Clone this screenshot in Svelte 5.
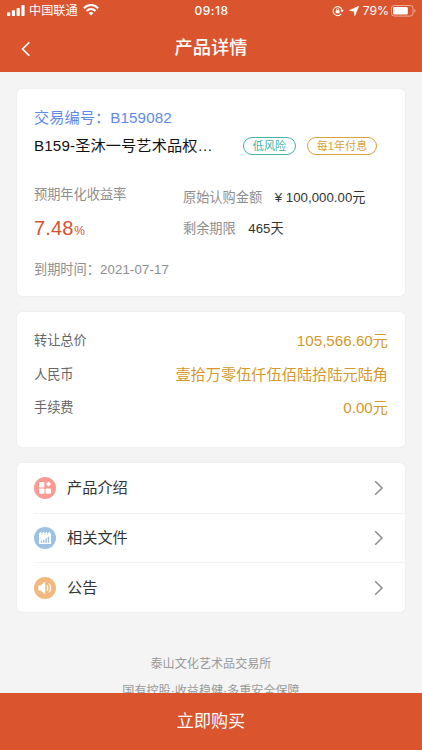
<script>
  const totals = [
    { label: '转让总价', value: '105,566.60元' },
    { label: '人民币', value: '壹拾万零伍仟伍佰陆拾陆元陆角' },
    { label: '手续费', value: '0.00元' }
  ];
  const links = [
    { label: '产品介绍', icon: 'grid', color: '#fb9a93' },
    { label: '相关文件', icon: 'file', color: '#9cc1e1' },
    { label: '公告', icon: 'horn', color: '#f1ba7c' }
  ];
</script>

<div class="screen">
  <header>
    <div class="status">
      <div class="left">
        <svg class="signal" width="18" height="12" viewBox="0 0 18 12" fill="#fff">
          <rect x="0" y="7.3" width="3.2" height="3.7" rx=".8" />
          <rect x="4.8" y="5.3" width="3.2" height="5.7" rx=".8" />
          <rect x="9.6" y="2.9" width="3.2" height="8.1" rx=".8" />
          <rect x="14.4" y="0" width="3.2" height="11" rx=".8" />
        </svg>
        <span class="carrier">中国联通</span>
        <svg class="wifi" width="16" height="12" viewBox="0 0 16 12" fill="none" stroke="#fff" stroke-width="2.1">
          <path d="M.9 4.2C5-.1 11-.1 15.1 4.2" />
          <path d="M3.5 7.1C6.1 4.5 9.9 4.5 12.5 7.1" />
          <path d="M5.6 9.1Q8 7.1 10.4 9.1L8 11.6Z" fill="#fff" stroke="none" />
        </svg>
      </div>
      <div class="time">09:18</div>
      <div class="right">
        <svg width="12" height="12" viewBox="0 0 12 12" fill="none" stroke="#fff" stroke-width="1.1">
          <path d="M9.2 8.9A4.5 4.5 0 1 1 10 5" />
          <path d="M8.3 5H11.8L10.1 7.3Z" fill="#fff" stroke="none" />
          <rect x="3.7" y="5.3" width="3.9" height="3" rx=".4" fill="#fff" stroke="none" />
          <path d="M4.5 5.5V4.6a1.15 1.15 0 0 1 2.3 0v.9" stroke-width=".8" />
        </svg>
        <svg class="arrow" width="10" height="10" viewBox="0 0 10 10" fill="#fff"><path d="M9.9.1L5.8 9.9L4.9 5.3L.1 4.4Z" stroke="#fff" stroke-width=".4" /></svg>
        <span class="pct">79%</span>
        <svg class="battery" width="25" height="12" viewBox="0 0 25 12">
          <rect x=".5" y=".5" width="21.5" height="10.6" rx="2.8" fill="none" stroke="#fff" stroke-opacity=".5" />
          <rect x="2" y="2" width="14.8" height="7.6" rx="1.4" fill="#fff" />
          <path d="M23.3 4v3.8q1.3-.7 1.3-1.9t-1.3-1.9" fill="#fff" fill-opacity=".5" />
        </svg>
      </div>
    </div>
    <div class="nav">
      <svg class="back" width="10" height="16" viewBox="0 0 10 16" fill="none" stroke="#fff" stroke-width="1.6"><path d="M8.3 1.4L1.5 8l6.8 6.6" /></svg>
      <h1>产品详情</h1>
    </div>
  </header>

  <main>
    <section class="card product">
      <div class="code">交易编号：B159082</div>
      <div class="name-row">
        <span class="name">B159-圣沐一号艺术品权…</span>
        <span class="tag risk">低风险</span>
        <span class="tag pay">每1年付息</span>
      </div>
      <div class="figures">
        <div class="rate">
          <div class="muted">预期年化收益率</div>
          <div class="percent">7.48<small>%</small></div>
        </div>
        <div class="facts">
          <div><span class="muted">原始认购金额</span><span class="val">¥ 100,000.00元</span></div>
          <div><span class="muted">剩余期限</span><span class="val">465天</span></div>
        </div>
      </div>
      <div class="due">到期时间：<span>2021-07-17</span></div>
    </section>

    <section class="card totals">
      {#each totals as row}
        <div class="total"><span>{row.label}</span><b>{row.value}</b></div>
      {/each}
    </section>

    <section class="card links">
      {#each links as link}
        <div class="link">
          <svg width="22" height="22" viewBox="0 0 22 22">
            <circle cx="11" cy="11" r="11" fill={link.color} />
            {#if link.icon === 'grid'}
              <g fill="#fff">
                <rect x="5" y="5" width="5.4" height="5.4" rx=".7" />
                <rect x="5" y="11.6" width="5.4" height="5.2" rx=".7" />
                <rect x="11.6" y="11.6" width="5.4" height="5.2" rx=".7" />
                <path d="M14.5 4.4L17.1 7L14.5 9.6L11.9 7Z" />
              </g>
            {:else if link.icon === 'file'}
              <path d="M5 6.2H17V17H6Q5 17 5 16Z" fill="#fff" />
              <path d="M6.8 5v2.4M9.6 5v2.4M12.4 5v2.4M15.2 5v2.4" stroke="#fff" stroke-width="1.3" />
              <path d="M7.4 7.2h.8M10.3 7.2h.8M13.2 7.2h.8" stroke={link.color} stroke-width="1" />
              <path d="M7.5 15.8v-1.9M9.8 15.8v-3.1M12.1 15.8v-4.5M14.4 15.8V9.7" stroke={link.color} stroke-width="1.4" />
            {:else}
              <path d="M4.4 8.4H6.4L11.2 4.6V17.2L6.4 13.6H4.4Z" fill="#fff" />
              <path d="M12.9 8.3Q14.7 11 12.9 13.7M15 6.5Q18.2 11 15 15.5" fill="none" stroke="#fff" stroke-width="1.2" />
            {/if}
          </svg>
          <span>{link.label}</span>
          <svg class="chev" width="10" height="16" viewBox="0 0 10 16" fill="none" stroke="#8d8d8d" stroke-width="1.5"><path d="M1.2 1.2L8 8l-6.8 6.8" /></svg>
        </div>
      {/each}
    </section>

    <div class="about">
      <div>泰山文化艺术品交易所</div>
      <div>国有控股·收益稳健·多重安全保障</div>
    </div>
  </main>

  <div class="buy">立即购买</div>
</div>

<style>
  :global(body) { margin: 0; }
  .screen {
    width: 422px; height: 750px; overflow: hidden;
    display: flex; flex-direction: column;
    background: #f4f4f4; color: #333;
    font-family: "Liberation Sans", "Noto Sans CJK SC", sans-serif;
    font-size: 13.2px; white-space: nowrap;
  }
  .screen * { box-sizing: border-box; }
  svg { display: block; flex: none; }
  header { flex: none; height: 72px; background: #da542e; color: #fff; }
  .status { display: grid; grid-template-columns: 1fr auto 1fr; height: 22px; align-items: center; padding: 0 6px 0 7px; }
  .left, .right { display: flex; align-items: center; }
  .left { height: 22px; }
  .right { justify-content: flex-end; }
  .carrier { margin-left: 4px; font-size: 12.2px; line-height: 24px; }
  .wifi { margin-left: 5px; margin-top: -2px; }
  .time { font: 500 12px/22px Inter, sans-serif; letter-spacing: .5px; }
  .arrow { margin-left: 5px; }
  .pct { font: 400 12.2px/22px Inter, sans-serif; margin-left: 4px; }
  .battery { margin-left: 2px; }
  .nav { height: 50px; display: grid; grid-template-columns: 1fr auto 1fr; align-items: center; }
  .back { margin-left: 21px; margin-top: 1px; }
  h1 { margin: 0; font-size: 18.2px; line-height: 52px; font-weight: 500; }
  main { flex: 1; min-height: 0; overflow: hidden; padding: 17px 17px 0; }
  .card { background: #fff; border-radius: 5px; box-shadow: 0 0 2px rgba(0, 0, 0, .08); margin-bottom: 16px; }
  .product { height: 207px; padding: 15px 17px 0; }
  .code { font-size: 15.2px; line-height: 28px; color: #5f89e8; letter-spacing: .08px; }
  .name-row { display: flex; align-items: center; height: 27px; }
  .name { width: 209px; font-size: 15.2px; line-height: 28px; color: #111; letter-spacing: .12px; }
  .tag { height: 18px; border: 1px solid; border-radius: 9px; font-size: 11.1px; line-height: 17px; text-align: center; }
  .risk { width: 53px; color: #43b5a4; }
  .pay { width: 70px; margin-left: 11px; color: #d8a03c; }
  .figures { display: flex; height: 97px; padding-top: 26px; }
  .rate { width: 149px; line-height: 20px; }
  .muted { color: #8e8e8e; }
  .percent { color: #d4532f; font-size: 20px; line-height: 28px; margin-top: 9px; letter-spacing: .15px; }
  .percent small { font-size: 12px; margin-left: .6px; }
  .facts { line-height: 31px; margin-top: -3px; }
  .val { margin-left: 12.5px; letter-spacing: .06px; }
  .due { line-height: 28px; color: #8e8e8e; }
  .due span { letter-spacing: .15px; }
  .totals { height: 135px; padding: 12px 17px 0; }
  .total { display: flex; justify-content: space-between; height: 33.6px; line-height: 34px; color: #666; }
  .total b { font-weight: 400; font-size: 15.2px; color: #d5992b; }
  .links { height: 149px; }
  .link { display: flex; align-items: center; height: 49.67px; margin-left: 17px; padding-right: 21px; font-size: 15.2px; }
  .link + .link { border-top: 1px solid #f3f3f3; }
  .link span { flex: 1; margin-left: 11px; line-height: 30px; }
  .about { padding-top: 23px; text-align: center; font-size: 12.1px; line-height: 27px; color: #999; }
  .buy { flex: none; height: 57px; background: #da542e; color: #fff; text-align: center; font-size: 17.1px; line-height: 58px; }
</style>
